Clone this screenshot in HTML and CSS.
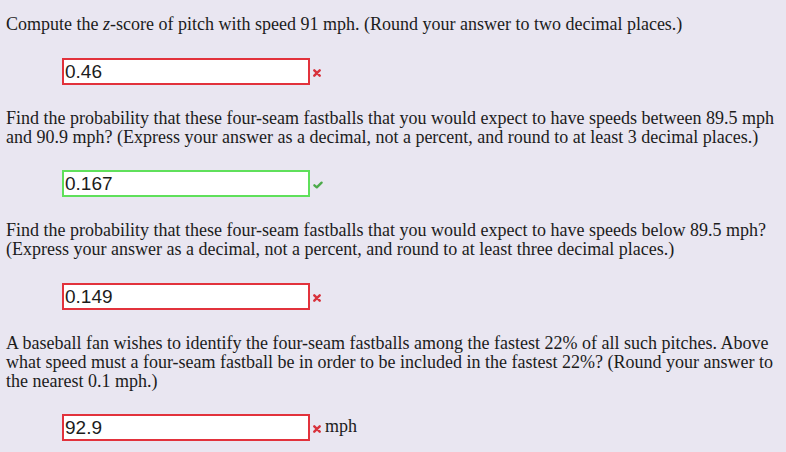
FILE: index.html
```html
<!DOCTYPE html>
<html>
<head>
<meta charset="utf-8">
<link rel="stylesheet" href="styles.css">
</head>
<body>
<div class="page">
  <div class="q">
    <p class="text">Compute the <i>z</i>-score of pitch with speed 91 mph. (Round your answer to two decimal places.)</p>
    <div class="answer">
      <div class="box wrong">0.46</div>
      <svg class="mark" width="8" height="8" viewBox="0 0 8 8"><path d="M1.3 1.3L6.7 6.7M6.7 1.3L1.3 6.7" stroke="#d8323c" stroke-width="2.4" stroke-linecap="round"/></svg>
    </div>
  </div>
  <div class="q">
    <p class="text">Find the probability that these four-seam fastballs that you would expect to have speeds between 89.5 mph and 90.9 mph? (Express your answer as a decimal, not a percent, and round to at least 3 decimal places.)</p>
    <div class="answer">
      <div class="box right">0.167</div>
      <svg class="mark" width="10" height="8" viewBox="0 0 10 8"><path d="M1.4 4.3L3.8 6.4L8.6 1.6" fill="none" stroke="#4caa4a" stroke-width="2.3" stroke-linecap="round" stroke-linejoin="round"/></svg>
    </div>
  </div>
  <div class="q">
    <p class="text">Find the probability that these four-seam fastballs that you would expect to have speeds below 89.5 mph? (Express your answer as a decimal, not a percent, and round to at least three decimal places.)</p>
    <div class="answer">
      <div class="box wrong">0.149</div>
      <svg class="mark" width="8" height="8" viewBox="0 0 8 8"><path d="M1.3 1.3L6.7 6.7M6.7 1.3L1.3 6.7" stroke="#d8323c" stroke-width="2.4" stroke-linecap="round"/></svg>
    </div>
  </div>
  <div class="q">
    <p class="text">A baseball fan wishes to identify the four-seam fastballs among the fastest 22% of all such pitches. Above what speed must a four-seam fastball be in order to be included in the fastest 22%? (Round your answer to the nearest 0.1 mph.)</p>
    <div class="answer">
      <div class="box wrong">92.9</div>
      <svg class="mark" width="8" height="8" viewBox="0 0 8 8"><path d="M1.3 1.3L6.7 6.7M6.7 1.3L1.3 6.7" stroke="#d8323c" stroke-width="2.4" stroke-linecap="round"/></svg>
      <span class="unit">mph</span>
    </div>
  </div>
</div>
</body>
</html>
```
FILE: styles.css
```css
html, body {
  margin: 0;
  padding: 0;
  background: #e9e6f1;
}
.page {
  padding: 15px 6px 0 6px;
  font-family: "Liberation Serif", "Times New Roman", serif;
  font-size: 18px;
  color: #1c1c1c;
}
.q {
  display: flex;
  flex-direction: column;
}
.text {
  margin: 0;
  line-height: 18.8px;
}
.answer {
  display: flex;
  align-items: center;
  margin: 24px 0 24px 56px;
}
.box {
  box-sizing: border-box;
  width: 248px;
  height: 27px;
  background: #fff;
  border: 2px solid #e2323c;
  font-family: "Liberation Sans", Arial, sans-serif;
  font-size: 19px;
  line-height: 23px;
  padding-left: 1px;
  color: #1c1c1c;
}
.box.right {
  border-color: #5fe05b;
}
.mark {
  margin-left: 3px;
  margin-top: 3px;
}
.unit {
  margin-left: 4px;
  margin-top: -3px;
}
```
